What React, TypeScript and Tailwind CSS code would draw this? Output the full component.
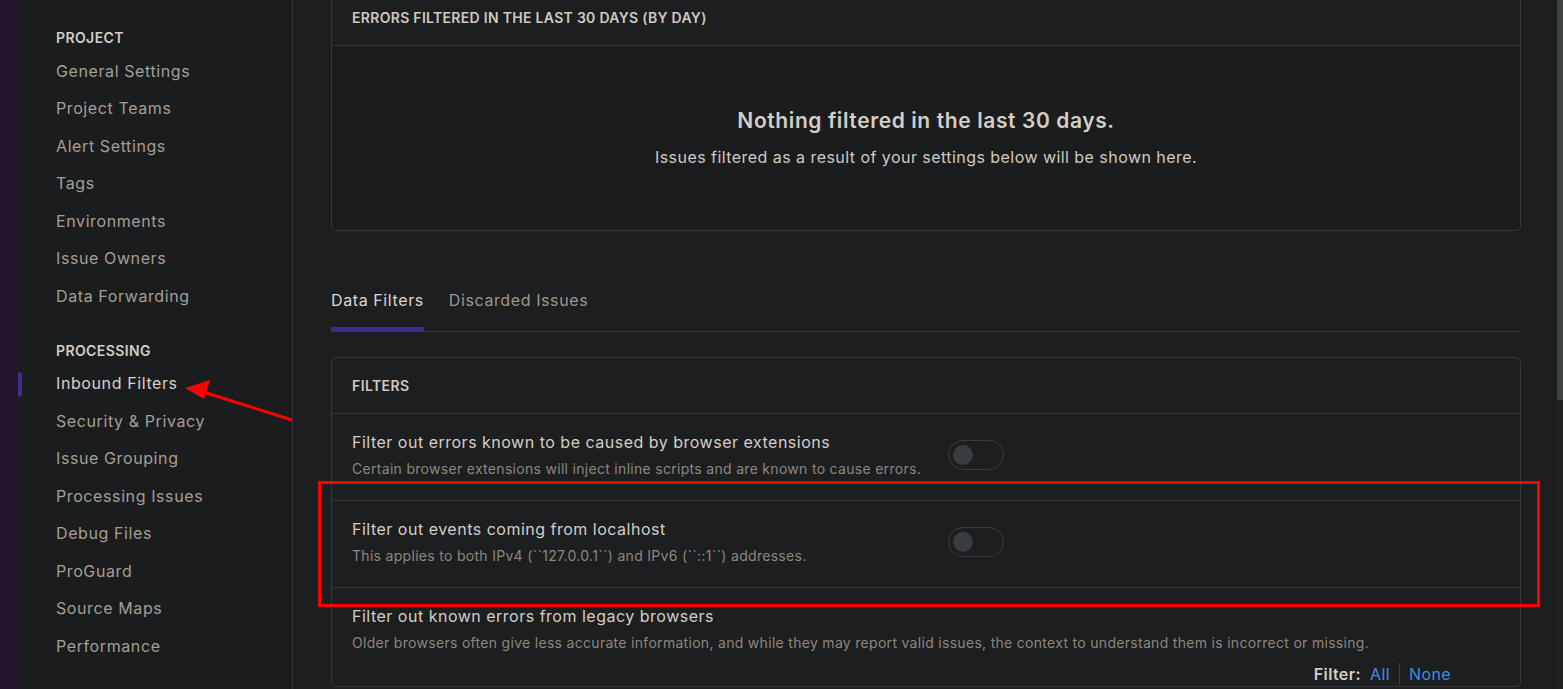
const projectLinks = [
  "General Settings",
  "Project Teams",
  "Alert Settings",
  "Tags",
  "Environments",
  "Issue Owners",
  "Data Forwarding",
];

const processingLinks = [
  "Inbound Filters",
  "Security & Privacy",
  "Issue Grouping",
  "Processing Issues",
  "Debug Files",
  "ProGuard",
  "Source Maps",
  "Performance",
];

function NavItem({ label, active }: { label: string; active?: boolean }) {
  return (
    <div className="relative flex h-[37.5px] items-center pl-[38px]">
      {active && <span className="absolute left-0 top-[7px] h-[25px] w-[4px] rounded-r-sm bg-[#3d2f8c]" />}
      <span
        className={
          active
            ? "text-[16px] tracking-[0.6px] text-[#d6d1c9]"
            : "text-[16px] tracking-[0.6px] text-[#a49f95]"
        }
      >
        {label}
      </span>
    </div>
  );
}

function Toggle() {
  return (
    <div className="flex h-[30px] w-[56px] items-center rounded-full border border-[#3a3b3e] px-[4px]">
      <span className="h-[20px] w-[20px] rounded-full bg-[#3a3d40]" />
    </div>
  );
}

function FilterRow({ title, desc }: { title: string; desc: string }) {
  return (
    <div className="flex items-center border-b border-[#36373a] px-[20px] pb-[21px] pt-[16px]">
      <div className="w-[596px]">
        <div className="text-[16px] leading-[24px] tracking-[0.5px] text-[#d3cec6]">{title}</div>
        <div className="mt-[5px] text-[14px] leading-[20px] tracking-[0.3px] text-[#8c877f]">{desc}</div>
      </div>
      <Toggle />
    </div>
  );
}

export default function App() {
  return (
    <div
      className="relative flex h-[689px] w-full overflow-hidden bg-[#1d1e20]"
      style={{ fontFamily: "Inter, 'Noto Sans', sans-serif" }}
    >
      {/* purple app rail */}
      <div className="w-[18px] shrink-0 bg-[#24152f]" />

      {/* settings sidebar */}
      <aside className="w-[275px] shrink-0 border-r border-[#333437] bg-[#1b1c1e] pt-[28px]">
        <div className="pl-[38px] text-[14px] font-semibold leading-[20px] tracking-[0.4px] text-[#d3cec6]">PROJECT</div>
        <div className="mt-[4px]">
          {projectLinks.map((l) => (
            <NavItem key={l} label={l} />
          ))}
        </div>
        <div className="mt-[26px] pl-[38px] text-[14px] font-semibold leading-[20px] tracking-[0.4px] text-[#d3cec6]">PROCESSING</div>
        <div className="mt-[4px]">
          {processingLinks.map((l) => (
            <NavItem key={l} label={l} active={l === "Inbound Filters"} />
          ))}
        </div>
      </aside>

      {/* main */}
      <main className="flex-1 pl-[38px] pr-[36px]">
        <section className="rounded-b-[5px] border-x border-b border-[#36373a]">
          <div className="h-[46px] border-b border-[#36373a] px-[20px] pt-[10px] text-[14px] font-semibold leading-[16px] tracking-[0.3px] text-[#cfcac2]">
            ERRORS FILTERED IN THE LAST 30 DAYS (BY DAY)
          </div>
          <div className="flex h-[184px] flex-col items-center justify-center gap-[10px] rounded-b-[5px] bg-[#1b1c1e]">
            <div className="text-[21px] font-semibold leading-[28px] tracking-[0.6px] text-[#d3cec6]">Nothing filtered in the last 30 days.</div>
            <div className="text-[16px] leading-[24px] tracking-[0.45px] text-[#cfcac2]">Issues filtered as a result of your settings below will be shown here.</div>
          </div>
        </section>

        <div className="mt-[57px] flex gap-[25px] border-b border-[#36373a]">
          <div className="border-b-[4px] border-[#3d2f8c] pb-[15px] text-[16px] leading-[24px] tracking-[0.6px] text-[#dcd7cf]">Data Filters</div>
          <div className="pb-[19px] text-[16px] leading-[24px] tracking-[0.6px] text-[#9c978d]">Discarded Issues</div>
        </div>

        <section className="mt-[25px] rounded-[5px] border border-[#36373a]">
          <div className="flex h-[56px] items-center border-b border-[#36373a] px-[20px] text-[14px] font-semibold tracking-[0.4px] text-[#cfcac2]">
            FILTERS
          </div>
          <FilterRow
            title="Filter out errors known to be caused by browser extensions"
            desc="Certain browser extensions will inject inline scripts and are known to cause errors."
          />
          <FilterRow
            title="Filter out events coming from localhost"
            desc="This applies to both IPv4 (``127.0.0.1``) and IPv6 (``::1``) addresses."
          />
          <div className="px-[20px] pt-[16px]">
            <div className="text-[16px] leading-[24px] tracking-[0.5px] text-[#d3cec6]">Filter out known errors from legacy browsers</div>
            <div className="mt-[5px] text-[14px] leading-[20px] tracking-[0.3px] text-[#8c877f]">
              Older browsers often give less accurate information, and while they may report valid issues, the context to understand them is incorrect or missing.
            </div>
            <div className="mt-[9px] flex items-center justify-end pr-[49px] text-[16px] leading-[24px] tracking-[0.4px]">
              <span className="font-semibold text-[#d3cec6]">Filter:</span>
              <span className="ml-[9px] text-[#3d8ee6]">All</span>
              <span className="mx-[9px] h-[22px] w-px bg-[#3e3f42]" />
              <span className="text-[#3d8ee6]">None</span>
            </div>
          </div>
        </section>
      </main>

      {/* scrollbar */}
      <div className="flex w-[6px] shrink-0 flex-col bg-[#1f2124]">
        <div className="h-[400px] bg-[#3d4446]" />
      </div>

      {/* red annotations */}
      <div className="pointer-events-none absolute left-[318px] top-[481px] h-[126px] w-[1222px] border-[3px] border-[#ff0000]" />
      <svg className="pointer-events-none absolute left-0 top-0" width="320" height="450" viewBox="0 0 320 450">
        <line x1="292" y1="420" x2="203" y2="392" stroke="#ff0000" strokeWidth="3" />
        <polygon points="185,388 210,380 204,399" fill="#ff0000" />
      </svg>
    </div>
  );
}
